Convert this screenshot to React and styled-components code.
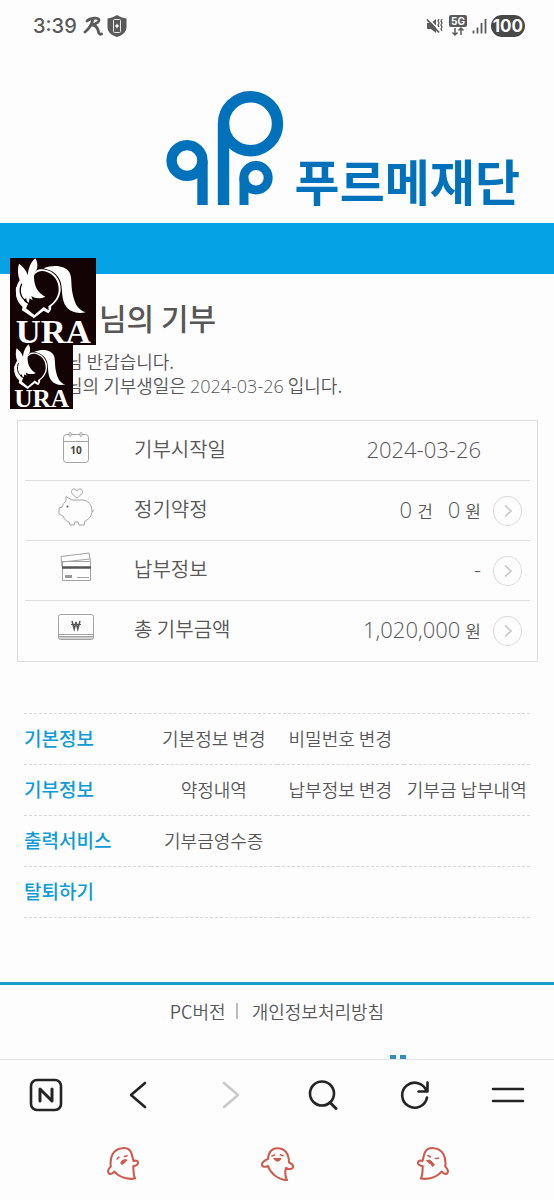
import styled, { createGlobalStyle } from "styled-components";

const GlobalStyle = createGlobalStyle`
  * {
    box-sizing: border-box;
  }

  body {
    margin: 0;
    background: #fdfdfd;
    color: #575757;
    font-family: "Noto Sans CJK KR", "Noto Sans", sans-serif;
    font-weight: 350;
  }

  a {
    color: inherit;
    text-decoration: none;
  }

  svg {
    display: block;
    flex: none;
  }
`;

const StatusBar = styled.div`
  display: flex;
  align-items: center;
  justify-content: space-between;
  height: 52px;
  padding: 0 29px 0 33px;
  color: #5a5a5a;

  .side {
    display: flex;
    align-items: center;
    gap: 4px;
  }

  .time {
    margin-right: 2px;
    font-family: Inter, sans-serif;
    font-size: 20px;
    font-weight: 500;
    line-height: 24px;
  }

  .battery {
    padding: 0 2px;
    border-radius: 11px;
    background: #484848;
    color: #ffffff;
    font-family: Inter, sans-serif;
    font-size: 17px;
    font-weight: 700;
    line-height: 22px;
  }
`;

const Header = styled.header`
  display: flex;
  align-items: flex-end;
  justify-content: flex-end;
  height: 171px;
  padding: 0 34px 18px 0;
  color: #0072bc;

  a {
    display: flex;
    align-items: flex-end;
    gap: 11px;
  }

  .name {
    padding-bottom: 2px;
    font-size: 49px;
    font-weight: 700;
    line-height: 46px;
  }
`;

const Band = styled.div`
  height: 51px;
  background: #06a2e6;
`;

const Greeting = styled.section`
  position: relative;
  padding: 22px 16px 0;

  h1 {
    margin: 0 0 11px;
    padding-left: 83px;
    font-size: 30px;
    font-weight: 500;
    line-height: 42px;
  }

  p {
    margin: 0;
    padding-left: 50px;
    font-size: 18px;
    line-height: 24px;
  }
`;

const Num = styled.span`
  font-family: "Open Sans", "Noto Sans", sans-serif;
  font-size: ${({ $size }) => $size}px;
`;

const Sticker = styled.svg`
  position: absolute;
  left: 10px;
  top: ${({ $top }) => $top}px;
  overflow: visible;
`;

const Summary = styled.table`
  width: calc(100% - 33px);
  margin: 22px 16px 0 17px;
  padding: 0 7px;
  border: 1px solid #dcdcdc;
  border-spacing: 0;
  table-layout: fixed;

  th,
  td {
    height: 60px;
    padding: 0;
    border-bottom: 1px solid #dedede;
    font-size: 20px;
    font-weight: 350;
    line-height: 28px;
    text-align: left;
  }

  tr:last-child > * {
    border-bottom: 0;
  }

  .icon {
    width: 109px;
    padding: 0 7px 8px 0;
  }

  .icon svg {
    margin: 0 auto;
  }

  .label {
    width: 130px;
    padding-bottom: 4px;
  }

  .value {
    padding-bottom: 2px;
    text-align: right;
  }

  .more {
    width: 49px;
    padding-left: 12px;
  }

  .pair + .pair {
    margin-left: 15px;
  }

  small {
    margin-left: 5px;
    font-size: 17px;
  }
`;

const MoreButton = styled.button`
  display: flex;
  align-items: center;
  justify-content: center;
  width: 29px;
  height: 30px;
  padding: 0;
  border: 1px solid #dcdcdc;
  border-radius: 50%;
  background: transparent;
  color: #c8c8c8;
`;

const LinkTable = styled.table`
  width: calc(100% - 48px);
  margin: 51px 24px 0;
  border-spacing: 0;
  border-top: 1px dashed #d8d8d8;
  table-layout: fixed;

  th,
  td {
    height: 51px;
    padding: 0 0 2px;
    border-bottom: 1px dashed #d8d8d8;
    font-size: 18px;
    font-weight: 350;
    line-height: 26px;
    text-align: center;
    white-space: nowrap;
  }

  th {
    color: #0f9bd7;
    font-size: 19px;
    font-weight: 500;
    text-align: left;
  }
`;

const Footer = styled.footer`
  margin-top: 64px;
  height: 77px;
  border-top: 3px solid #1c9ccb;
  overflow: hidden;

  .links {
    display: flex;
    align-items: center;
    justify-content: center;
    height: 52px;
    font-size: 18px;
    line-height: 24px;
  }

  .rule {
    width: 2px;
    height: 16px;
    margin: 0 14px 0 10px;
    background: #bdbdbd;
  }

  .mark {
    margin: 18px 0 0 auto;
    width: 164px;
  }
`;

const BrowserBar = styled.nav`
  display: grid;
  grid-template-columns: repeat(6, 1fr);
  height: 71px;
  border-top: 1px solid #e3e3e3;
  color: #242424;

  button {
    display: flex;
    align-items: center;
    justify-content: center;
    padding: 0;
    border: 0;
    background: transparent;
    color: inherit;
  }

  button:disabled {
    color: #c9c9c9;
  }
`;

const SystemBar = styled.nav`
  display: grid;
  grid-template-columns: repeat(3, 1fr);
  height: 68px;
  padding: 0 44px 0 46px;

  button {
    display: flex;
    align-items: center;
    justify-content: center;
    padding: 0;
    border: 0;
    background: transparent;
    color: #cf5a4e;
  }
`;

function UraSticker({ width, height, top }) {
  return (
    <Sticker
      $top={top}
      width={width}
      height={height}
      viewBox="6 9 258 261"
      preserveAspectRatio="none"
      role="img"
      aria-label="URA"
    >
      <path fill="#140304" d="M6 9h258v261H6z" />
      <g fill="#ffffff">
        <path d="M33 26c12 8 22 20 26 34 3-22 9-38 23-50 6 9 8 21 5 32-7 9-9 17-9 27 1 25 12 46 34 56-14 7-30 6-42-2l4 13-9-6-3 13c-6-3-7-8-7-13l-8 3c0 8 6 14 6 21l-9 1c-12-10-20-24-20-42 0-17 4-27 11-37-6-16-7-34-2-50z" />
        <path d="M24 96c-2 24 3 43 20 55l-2 15 36 24 29-23 14 8c8-9 10-13 8-20 17-14 28-31 29-50 2-33-22-59-53-62-18-2-25 5-27 18 10-13 23-15 37-11 24 8 38 29 37 56-1 20-14 37-31 48l1 12-15-10-28 24-25-20 6-14c-18-9-28-27-27-50z" />
        <path d="M106 40c32-12 66-8 78 12 9 16 4 38 10 65 6 29 16 48 39 55-21 5-46 1-59-18-14-20-10-43-15-69-5-23-24-39-53-45z" />
      </g>
      <path
        d="M41 86c-8 18-5 34 6 47"
        fill="none"
        stroke="#140304"
        strokeWidth="4"
      />
      <text
        x="23"
        y="263"
        fill="#ffffff"
        fontFamily="Liberation Serif, serif"
        fontSize="104"
        fontWeight="700"
      >
        URA
      </text>
    </Sticker>
  );
}

const line = {
  fill: "none",
  stroke: "#a3a3a3",
  strokeWidth: 1,
};

const CalendarIcon = () => (
  <svg width="28" height="36" viewBox="0 0 28 36" {...line}>
    <rect x="1.5" y="5.5" width="25" height="28" rx="3" />
    <path d="M1.5 12.500h25" />
    <rect x="7" y="3.500" width="2" height="4" rx="1" fill="#fff" />
    <rect x="18" y="3.500" width="2" height="4" rx="1" fill="#fff" />
    <text
      x="14"
      y="25"
      fill="#444444"
      stroke="none"
      fontFamily="Open Sans, sans-serif"
      fontSize="10"
      fontWeight="700"
      textAnchor="middle"
    >
      10
    </text>
  </svg>
);

const PiggyIcon = () => (
  <svg width="36" height="40" viewBox="0 0 36 40" {...line}>
    <path d="M19 11c-4-3-5.500-4.500-5.500-6.500 0-3 4-3.500 5.500-.5 1.500-3 5.500-2.500 5.500.5 0 2-1.500 3.500-5.500 6.500z" />
    <path d="M8 9.500l6 3.500h10c6 0 10 5 10 11 0 5-3 8-7 10l-1 4h-5l-1-3h-3l-1 3h-4l-1-3c-3-1-5-3-6-6l-4-2v-6l3-1c1-3 2-4 4-6z" />
    <path d="M34 24c1 1 1.500 0 1.500-1" />
    <circle cx="9.500" cy="19.500" r="1" fill="#555555" stroke="none" />
  </svg>
);

const CardsIcon = () => (
  <svg width="34" height="34" viewBox="0 0 34 34" {...line}>
    <path d="M3 17L2 6.500l28-3.500 1.500 8" />
    <path d="M3.500 11.500h28v19h-28z" fill="#fdfdfd" />
    <path d="M3 12L31 9" />
    <path d="M3 17.500h29" stroke="#555555" strokeWidth="2.500" />
    <path d="M6 26.500h7" stroke="#999999" strokeWidth="3" />
    <path d="M18 27.500h12" />
  </svg>
);

const MoneyIcon = () => (
  <svg width="36" height="28" viewBox="0 0 36 28" {...line}>
    <rect x=".5" y="1.500" width="35" height="25" rx="2" />
    <path d="M1 21.500h34M1 23.500h34M1 25h34" />
    <g stroke="#555555">
      <path d="M14 8l2.200 8L18 9l1.800 7L22 8" strokeWidth="1.500" />
      <path d="M13 11.500h10" />
    </g>
  </svg>
);

const ArrowIcon = () => (
  <svg width="8" height="12" viewBox="0 0 8 12" fill="none" stroke="currentColor" strokeWidth="1.600">
    <path d="M1 .5L7 6 1 11.500" />
  </svg>
);

const GHOST_BODY =
  "M15 1.200c4-.6 7.500 1 9 4 1.500 3 1.500 6 2.500 8.800 2-.8 4.500-.3 4.500 1.500s-2 3.500-4.700 3.500c0 5 .2 9 1.700 12.500C20 32.800 12 30 7.200 24.500c-1.200 2-3.600 3-5.200 2-1.900-1.500-.6-5 1.800-7C2.500 10 6 2.200 15 1.200z";

const ghostStroke = {
  fill: "none",
  stroke: "currentColor",
  strokeWidth: 2.1,
  strokeLinecap: "round",
  strokeLinejoin: "round",
};

const GhostLeft = () => (
  <svg width="32" height="34" viewBox="0 0 32 34" {...ghostStroke}>
    <path d={GHOST_BODY} />
    <path d="M10 12l2-1.800M17.500 9.500l2.500-.8" strokeWidth="1.600" />
    <path d="M14 15c1-2 4-3 6-2-1 1.800-2 2-2.500 2.700-.7.800-1.500 2-3 1.500z" fill="currentColor" strokeWidth="1" />
  </svg>
);

const GhostCenter = () => (
  <svg width="34" height="34" viewBox="0 0 34 34" {...ghostStroke}>
    <path d="M16.500 1.200C10 1.200 7.500 6 7 12c-3 1.200-6 3.200-6 5.500 0 2.500 3.500 2.800 6 1.500 2 6.500 9 13.500 19 14.300-2-4-2.200-8-1-12.300 2.500 1.500 6.500 1.500 7-.8.5-2-1.500-3.700-4-4.700C28 7 24 1.200 16.500 1.200z" />
    <path d="M11 9l2.500-1M19.500 7.800L22 8.800" strokeWidth="1.600" />
    <path d="M13 11.500h7c-1 3.500-6 3.500-7 0z" fill="currentColor" strokeWidth="1" />
  </svg>
);

const GhostRight = () => (
  <svg width="32" height="34" viewBox="0 0 32 34" {...ghostStroke}>
    <path d={GHOST_BODY} transform="matrix(-1 0 0 1 32 0)" />
    <path d="M11 8.500l2.500 1.500M18.500 11.500l3-.3" strokeWidth="1.600" />
    <path d="M10 13.500c2-1 4 0 5 1.500l2.500 3-2 1.500-2-3c-1 .5-2.500-.5-3.500-3z" fill="currentColor" strokeWidth="1" />
  </svg>
);

const summaryRows = [
  {
    label: "기부시작일",
    icon: <CalendarIcon />,
    values: [{ num: "2024-03-26" }],
  },
  {
    label: "정기약정",
    icon: <PiggyIcon />,
    values: [
      { num: "0", unit: "건" },
      { num: "0", unit: "원" },
    ],
    more: true,
  },
  { label: "납부정보", icon: <CardsIcon />, values: [{ num: "-" }], more: true },
  {
    label: "총 기부금액",
    icon: <MoneyIcon />,
    values: [{ num: "1,020,000", unit: "원" }],
    more: true,
  },
];

const linkRows = [
  { title: "기본정보", links: ["기본정보 변경", "비밀번호 변경", ""] },
  { title: "기부정보", links: ["약정내역", "납부정보 변경", "기부금 납부내역"] },
  { title: "출력서비스", links: ["기부금영수증", "", ""] },
  { title: "탈퇴하기", links: ["", "", ""] },
];

export default function App() {
  return (
    <>
      <GlobalStyle />
      <StatusBar>
        <div className="side">
          <span className="time">3:39</span>
          <svg width="20" height="20" viewBox="0 0 20 20" fill="none" stroke="currentColor" strokeWidth="2.800" strokeLinecap="round" strokeLinejoin="round">
            <path d="M4 5c3-3 12-4 12-1 0 3-4 4-7 5 3 0 5 2 6 5 .5 3 1.500 5 3.500 4M10 3c-1 5-3 9-8 13" />
          </svg>
          <svg width="20" height="22" viewBox="0 0 20 22">
            <path d="M10 0c3 2 6 3 9.500 3.500V12c0 5-4 8.500-9.500 10C4.500 20.500.5 17 .5 12V3.500C4 3 7 2 10 0z" fill="currentColor" />
            <rect x="6.500" y="4.500" width="7" height="13" rx="1" fill="none" stroke="#e8e8e8" strokeWidth="1" />
            <path d="M10 8.500l1 1.700 1.500.8-1.500.8-1 1.700-1-1.700-1.500-.8 1.500-.8z" fill="#fff" />
          </svg>
        </div>
        <div className="side">
          <svg width="18" height="18" viewBox="0 0 18 18" fill="none" stroke="currentColor">
            <path d="M1 6h4l5-4v14l-5-4H1z" fill="currentColor" stroke="none" />
            <path d="M2 1l13 14" stroke="#fdfdfd" strokeWidth="1.500" />
            <path d="M1 2.500l12 13" strokeWidth="1.800" />
            <path d="M13 2l-1 2 1 2-1 2 1 2M16 2l-1 2 1 2-1 2 1 2-1 2 1 2" strokeWidth="1.300" />
          </svg>
          <svg width="20" height="22" viewBox="0 0 20 22">
            <rect x="1" y="0" width="18" height="12" rx="2" fill="currentColor" />
            <text x="10" y="10" fill="#fff" fontFamily="Inter, sans-serif" fontSize="10" fontWeight="700" textAnchor="middle">
              5G
            </text>
            <path d="M7 13v7M4.500 17.500L7 20l2.500-2.500M13 20v-7M10.500 15.500L13 13l2.500 2.500" fill="none" stroke="currentColor" strokeWidth="1.500" />
          </svg>
          <svg width="15" height="16" viewBox="0 0 15 16" fill="none" stroke="currentColor" strokeWidth="1.800">
            <path d="M1.500 15.500v-3M5.500 15.500v-6M9.500 15.500V5M13.500 15.500V1" />
          </svg>
          <span className="battery">100</span>
        </div>
      </StatusBar>

      <Header>
        <a href="#home" aria-label="푸르메재단">
          <svg width="118" height="114" viewBox="0 0 118 114" fill="none" stroke="currentColor" role="img" aria-label="logo">
            <g strokeWidth="10.400">
              <circle cx="21" cy="69.500" r="15.400" />
              <path d="M36.500 69.500V114" />
            </g>
            <g strokeWidth="11.400">
              <circle cx="84.500" cy="32.700" r="27" />
              <path d="M57.500 32.700V114" />
            </g>
            <g strokeWidth="9">
              <circle cx="90" cy="86.700" r="12.200" />
              <path d="M78 86.700V114" />
            </g>
          </svg>
          <span className="name">푸르메재단</span>
        </a>
      </Header>
      <Band />

      <Greeting>
        <h1>님의 기부</h1>
        <p>님 반갑습니다.</p>
        <p>
          님의 기부생일은 <Num $size={18}>2024-03-26</Num> 입니다.
        </p>
        <UraSticker width={86} height={87} top={-16} />
        <UraSticker width={63} height={65} top={70} />
      </Greeting>

      <Summary>
        <tbody>
          {summaryRows.map((row) => (
            <tr key={row.label}>
              <td className="icon">{row.icon}</td>
              <th className="label" scope="row">
                {row.label}
              </th>
              <td className="value">
                {row.values.map(({ num, unit }, i) => (
                  <span className="pair" key={i}>
                    <Num $size={22}>{num}</Num>
                    {unit ? <small>{unit}</small> : null}
                  </span>
                ))}
              </td>
              <td className="more">
                {row.more ? (
                  <MoreButton type="button" aria-label={row.label}>
                    <ArrowIcon />
                  </MoreButton>
                ) : null}
              </td>
            </tr>
          ))}
        </tbody>
      </Summary>

      <LinkTable>
        <tbody>
          {linkRows.map((row) => (
            <tr key={row.title}>
              <th scope="row">{row.title}</th>
              {row.links.map((text, i) => (
                <td key={i}>{text ? <a href="#menu">{text}</a> : null}</td>
              ))}
            </tr>
          ))}
        </tbody>
      </LinkTable>

      <Footer>
        <div className="links">
          <a href="#pc">PC버전</a>
          <span className="rule" />
          <a href="#privacy">개인정보처리방침</a>
        </div>
        <svg className="mark" height="6" viewBox="0 0 164 6" fill="#2e8fba">
          <path d="M0 0h6v6H0zM10 0h6v6h-6z" />
        </svg>
      </Footer>

      <BrowserBar>
        <button type="button" aria-label="Home">
          <svg width="34" height="34" viewBox="0 0 34 34" fill="none" stroke="currentColor" strokeLinecap="round" strokeLinejoin="round">
            <rect x="2" y="2" width="30" height="30" rx="6" strokeWidth="2.600" />
            <path d="M11 23V11l12 12V11" strokeWidth="3" />
          </svg>
        </button>
        <button type="button" aria-label="Back">
          <svg width="18" height="28" viewBox="0 0 18 28" fill="none" stroke="currentColor" strokeWidth="2.600" strokeLinecap="round" strokeLinejoin="round">
            <path d="M16 2L2 14l14 12" />
          </svg>
        </button>
        <button type="button" aria-label="Forward" disabled>
          <svg width="18" height="28" viewBox="0 0 18 28" fill="none" stroke="currentColor" strokeWidth="2.600" strokeLinecap="round" strokeLinejoin="round">
            <path d="M2 2l14 12L2 26" />
          </svg>
        </button>
        <button type="button" aria-label="Search">
          <svg width="30" height="30" viewBox="0 0 30 30" fill="none" stroke="currentColor" strokeLinecap="round">
            <circle cx="14" cy="13.500" r="12" strokeWidth="2.600" />
            <path d="M22 22.500l6 6" strokeWidth="3" />
          </svg>
        </button>
        <button type="button" aria-label="Reload">
          <svg width="30" height="30" viewBox="0 0 30 30" fill="none" stroke="currentColor" strokeWidth="2.600" strokeLinecap="round" strokeLinejoin="round">
            <path d="M27 17.500A12.500 12.500 0 1 1 26.500 11M27.500 2.500v9h-9" />
          </svg>
        </button>
        <button type="button" aria-label="Menu">
          <svg width="34" height="16" viewBox="0 0 34 16" fill="none" stroke="currentColor" strokeWidth="2.600" strokeLinecap="round">
            <path d="M2 2h30M2 14h30" />
          </svg>
        </button>
      </BrowserBar>

      <SystemBar>
        <button type="button" aria-label="Recent apps">
          <GhostLeft />
        </button>
        <button type="button" aria-label="Home screen">
          <GhostCenter />
        </button>
        <button type="button" aria-label="Back">
          <GhostRight />
        </button>
      </SystemBar>
    </>
  );
}
